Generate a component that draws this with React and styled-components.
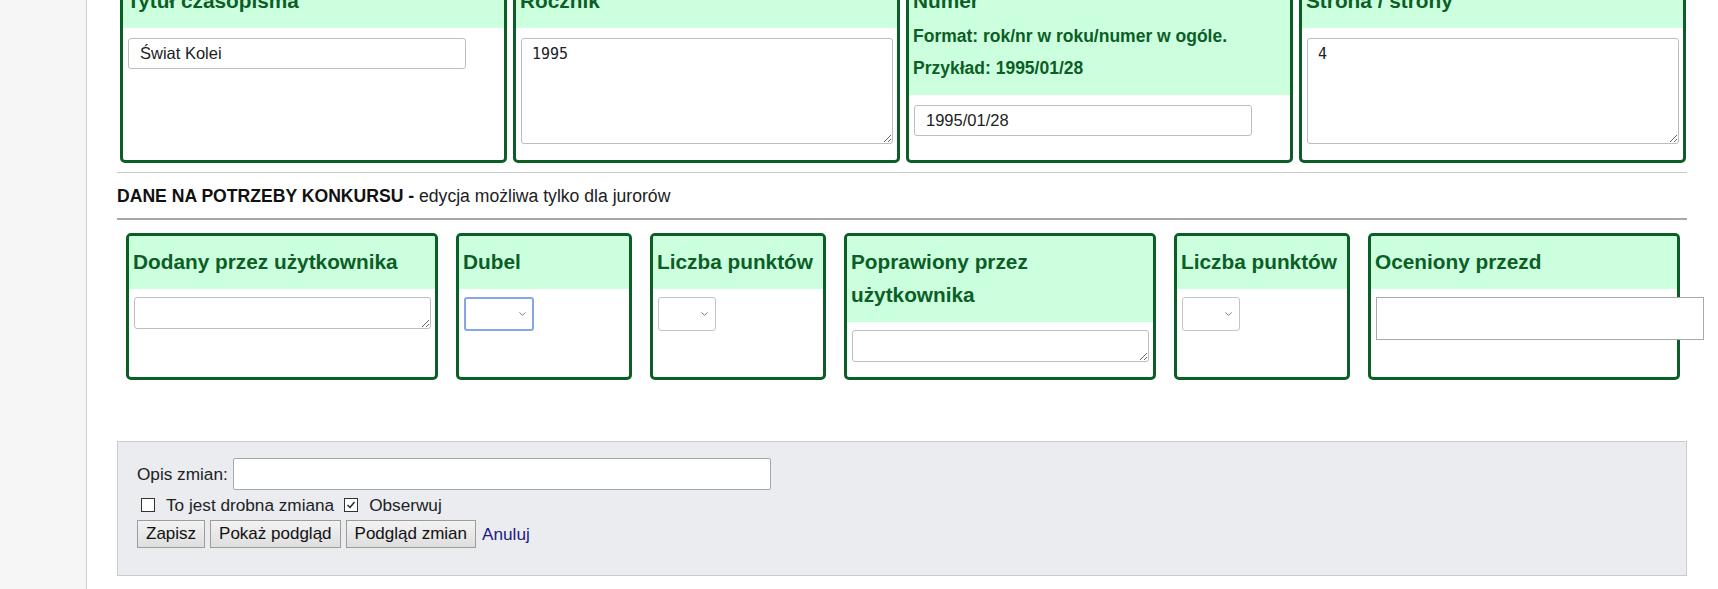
import React from 'react';
import styled, { createGlobalStyle } from 'styled-components';
import { ChevronDown } from 'lucide-react';

const GREEN = '#0b5e26';
const MINT = '#ccffdd';

const GlobalStyle = createGlobalStyle`
  html, body {
    margin: 0;
    padding: 0;
    overflow: hidden;
    background: #fff;
  }
  body {
    font-family: "Liberation Sans", Arial, sans-serif;
    color: #202122;
  }
`;

const Layout = styled.div`
  display: flex;
  min-height: 100vh;
`;

const Sidebar = styled.aside`
  flex: 0 0 86px;
  background: #f6f6f6;
  border-right: 1px solid #c8d1da;
`;

// the form is scrolled a little, so the first row of boxes starts above the fold
const Content = styled.main`
  flex: 1;
  min-width: 0;
  margin-top: -28px;
  padding: 0 31px 0 30px;
`;

const BoxRow = styled.div`
  display: flex;
  align-items: stretch;
  gap: ${p => p.$gap}px;
  padding-left: ${p => p.$indent}px;
  margin-top: ${p => p.$top || 0}px;
`;

const Card = styled.div`
  flex: 0 0 ${p => p.$w}px;
  min-width: 0;
  box-sizing: border-box;
  display: flex;
  flex-direction: column;
  border: 3px solid ${GREEN};
  border-radius: 5px;
  background: #fff;
`;

const CardHead = styled.div`
  background: ${MINT};
  color: ${GREEN};
  padding: 9px 4px 11px;
  border-radius: 2px 2px 0 0;
`;

const CardTitle = styled.h3`
  margin: 0;
  font-size: 20.8px;
  line-height: 33px;
  font-weight: bold;
`;

const Hint = styled.p`
  margin: 0;
  font-size: 17.5px;
  line-height: 32px;
  font-weight: bold;
  &:first-of-type {
    margin-top: 3px;
  }
`;

const CardBody = styled.div`
  padding: ${p => (p.$compact ? '8px 0 15px 5px' : '10px 0 16px 5px')};
`;

const TextInput = styled.input`
  display: block;
  box-sizing: border-box;
  width: ${p => p.$w}px;
  height: ${p => p.$h || 31}px;
  padding: 0 11px;
  border: 1px solid ${p => (p.$square ? '#a9a9a9' : '#bdbdbd')};
  border-radius: ${p => (p.$square ? 0 : 3)}px;
  font-family: "Liberation Sans", Arial, sans-serif;
  font-size: 16.5px;
  color: #202122;
  background: #fff;
  outline: none;
`;

const TextArea = styled.textarea`
  display: block;
  box-sizing: border-box;
  width: calc(100% - 4px);
  height: ${p => p.$h}px;
  padding: 6px 10px;
  border: 1px solid #bdbdbd;
  border-radius: 3px;
  font-family: "DejaVu Sans Mono", "Liberation Mono", monospace;
  font-size: 15px;
  color: #202122;
  background: #fff;
  outline: none;
`;

const SelectWrap = styled.div`
  position: relative;
  width: ${p => p.$w}px;
  height: 34px;
`;

const Select = styled.select`
  appearance: none;
  box-sizing: border-box;
  width: 100%;
  height: 100%;
  border: ${p => (p.$focused ? '2px solid #86a6e6' : '1px solid #c4c4c4')};
  border-radius: 3px;
  background: #fff;
  outline: none;
`;

const Chevron = styled(ChevronDown)`
  position: absolute;
  right: 6px;
  top: 50%;
  transform: translateY(-50%);
  pointer-events: none;
`;

const Rule = styled.div`
  height: ${p => (p.$thick ? 2 : 1)}px;
  background: ${p => (p.$thick ? '#a7a7a7' : '#c8c8c8')};
  margin-top: ${p => p.$top}px;
`;

const Notice = styled.div`
  margin-top: 9px;
  font-size: 17.6px;
  line-height: 28px;
  color: #202122;
  b {
    color: #111;
  }
`;

const EditOptions = styled.div`
  margin-top: 61px;
  background: #eaecf0;
  border: 1px solid #c8ccd1;
  padding: 16px 19px 27px;
  font-size: 17.2px;
  color: #202122;
`;

const SummaryRow = styled.div`
  display: flex;
  align-items: center;
  gap: 5px;
`;

const SummaryInput = styled.input`
  box-sizing: border-box;
  width: 538px;
  height: 32px;
  border: 1px solid #a2a9b1;
  border-radius: 2px;
  background: #fff;
  outline: none;
`;

const CheckRow = styled.div`
  display: flex;
  align-items: center;
  height: 30px;
`;

const CheckBox = styled.span`
  box-sizing: border-box;
  width: 14px;
  height: 14px;
  margin: 0 11px 0 ${p => p.$gap}px;
  border: 1px solid #333;
  background: #fff;
  display: inline-flex;
  align-items: center;
  justify-content: center;
`;

const ButtonRow = styled.div`
  display: flex;
  align-items: center;
  gap: 5px;
`;

const Button = styled.button`
  height: 28px;
  padding: 0 8px;
  border: 1px solid #9c9c9c;
  border-radius: 0;
  background: linear-gradient(#f3f3f3, #dedede);
  font-family: "Liberation Sans", Arial, sans-serif;
  font-size: 17px;
  color: #111;
`;

const CancelLink = styled.a`
  margin-left: 1px;
  color: #1d1a86;
  text-decoration: none;
`;

const Dropdown = ({ w, focused }) => (
  <SelectWrap $w={w}>
    <Select $focused={focused}>
      <option></option>
    </Select>
    <Chevron size={11} strokeWidth={1.8} color="#5f5f5f" />
  </SelectWrap>
);

const Tick = ({ on }) => (
  <CheckBox $gap={on ? 10 : 4}>
    {on && (
      <svg width="10" height="10" viewBox="0 0 10 10">
        <polyline points="1.5,5 4,7.5 8.5,2" fill="none" stroke="#222" strokeWidth="1.4" />
      </svg>
    )}
  </CheckBox>
);

const App = () => {
  return (
    <>
      <GlobalStyle />
      <Layout>
        <Sidebar />
        <Content>
          <BoxRow $gap={6} $indent={3}>
            <Card $w={387}>
              <CardHead>
                <CardTitle>Tytuł czasopisma</CardTitle>
              </CardHead>
              <CardBody>
                <TextInput $w={338} defaultValue="Świat Kolei" />
              </CardBody>
            </Card>
            <Card $w={387}>
              <CardHead>
                <CardTitle>Rocznik</CardTitle>
              </CardHead>
              <CardBody>
                <TextArea $h={106} defaultValue="1995" />
              </CardBody>
            </Card>
            <Card $w={387}>
              <CardHead>
                <CardTitle>Numer</CardTitle>
                <Hint>Format: rok/nr w roku/numer w ogóle.</Hint>
                <Hint>Przykład: 1995/01/28</Hint>
              </CardHead>
              <CardBody>
                <TextInput $w={338} defaultValue="1995/01/28" />
              </CardBody>
            </Card>
            <Card $w={387}>
              <CardHead>
                <CardTitle>Strona / strony</CardTitle>
              </CardHead>
              <CardBody>
                <TextArea $h={106} defaultValue="4" />
              </CardBody>
            </Card>
          </BoxRow>

          <Rule $top={9} />
          <Notice>
            <b>DANE NA POTRZEBY KONKURSU -</b> edycja możliwa tylko dla jurorów
          </Notice>
          <Rule $thick $top={8} />

          <BoxRow $gap={18} $indent={9} $top={13}>
            <Card $w={312}>
              <CardHead>
                <CardTitle>Dodany przez użytkownika</CardTitle>
              </CardHead>
              <CardBody $compact>
                <TextArea $h={32} />
              </CardBody>
            </Card>
            <Card $w={176}>
              <CardHead>
                <CardTitle>Dubel</CardTitle>
              </CardHead>
              <CardBody $compact>
                <Dropdown w={70} focused />
              </CardBody>
            </Card>
            <Card $w={176}>
              <CardHead>
                <CardTitle>Liczba punktów</CardTitle>
              </CardHead>
              <CardBody $compact>
                <Dropdown w={58} />
              </CardBody>
            </Card>
            <Card $w={312}>
              <CardHead>
                <CardTitle>Poprawiony przez użytkownika</CardTitle>
              </CardHead>
              <CardBody $compact>
                <TextArea $h={32} />
              </CardBody>
            </Card>
            <Card $w={176}>
              <CardHead>
                <CardTitle>Liczba punktów</CardTitle>
              </CardHead>
              <CardBody $compact>
                <Dropdown w={58} />
              </CardBody>
            </Card>
            <Card $w={312}>
              <CardHead>
                <CardTitle>Oceniony przezd</CardTitle>
              </CardHead>
              <CardBody $compact>
                <TextInput $w={328} $h={43} $square />
              </CardBody>
            </Card>
          </BoxRow>

          <EditOptions>
            <SummaryRow>
              <span>Opis zmian:</span>
              <SummaryInput />
            </SummaryRow>
            <CheckRow>
              <Tick />
              <span>To jest drobna zmiana</span>
              <Tick on />
              <span>Obserwuj</span>
            </CheckRow>
            <ButtonRow>
              <Button>Zapisz</Button>
              <Button>Pokaż podgląd</Button>
              <Button>Podgląd zmian</Button>
              <CancelLink href="#">Anuluj</CancelLink>
            </ButtonRow>
          </EditOptions>
        </Content>
      </Layout>
    </>
  );
};

export default App;
